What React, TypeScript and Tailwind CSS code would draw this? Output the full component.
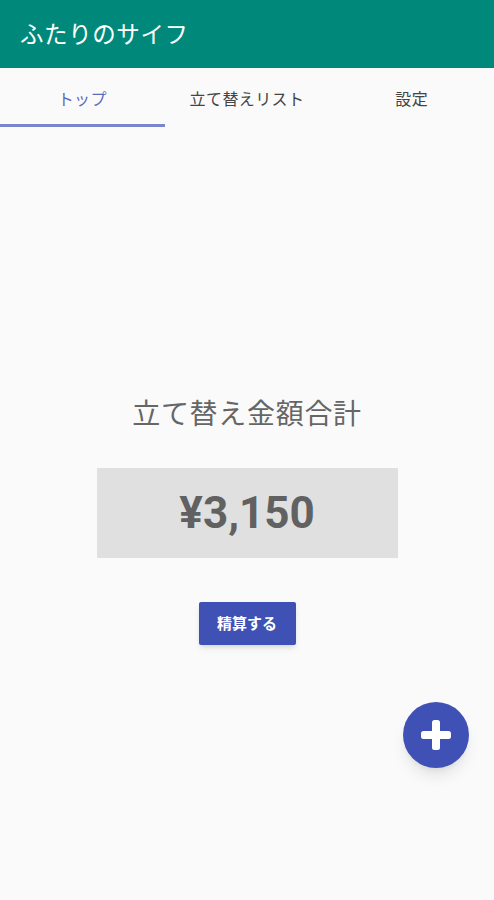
import React, { useState } from 'react';

const tabs = ['トップ', '立て替えリスト', '設定'];

export default function App() {
  const [active, setActive] = useState(0);

  return (
    <div
      className="relative w-full h-[900px] bg-[#fafafa] flex flex-col overflow-hidden"
      style={{ fontFamily: '"Noto Sans CJK JP", Roboto, sans-serif' }}
    >
      {/* App bar */}
      <header className="h-[68px] bg-[#00897b] flex items-center px-5 shadow-sm">
        <h1 className="text-white text-[23.5px] leading-none font-normal tracking-wide">ふたりのサイフ</h1>
      </header>

      {/* Tabs */}
      <nav className="h-[59px] grid grid-cols-3 bg-[#fafafa]">
        {tabs.map((t, i) => (
          <button
            key={t}
            onClick={() => setActive(i)}
            className={`relative flex items-center justify-center text-[16px] tracking-wide ${
              active === i ? 'text-[#5c6bc0]' : 'text-[#444444]'
            }`}
          >
            {t}
            {active === i && <span className="absolute left-0 right-0 bottom-0 h-[3px] bg-[#7986cb]" />}
          </button>
        ))}
      </nav>

      {/* Main */}
      <main className="flex flex-col items-center pt-[271px]">
        <h2 className="text-[28px] leading-none text-[#666666] tracking-wide">立て替え金額合計</h2>
        <div className="mt-[42px] w-[301px] h-[90px] bg-[#e0e0e0] flex items-center justify-center">
          <span
            className="text-[44px] font-bold text-[#616161] leading-none"
            style={{ fontFamily: 'Roboto, "Noto Sans CJK JP", sans-serif' }}
          >
            ¥3,150
          </span>
        </div>
        <button className="mt-[44px] w-[97px] h-[43px] bg-[#3f51b5] rounded-[2px] shadow-md text-white text-[15px] font-bold">
          精算する
        </button>
      </main>

      {/* FAB */}
      <button className="absolute left-[403px] top-[702px] w-[66px] h-[66px] rounded-full bg-[#3f51b5] shadow-lg flex items-center justify-center">
        <svg width="36" height="36" viewBox="0 0 36 36">
          <rect x="14" y="3" width="8" height="30" rx="2.5" fill="white" />
          <rect x="3" y="14" width="30" height="8" rx="2.5" fill="white" />
        </svg>
      </button>
    </div>
  );
}
